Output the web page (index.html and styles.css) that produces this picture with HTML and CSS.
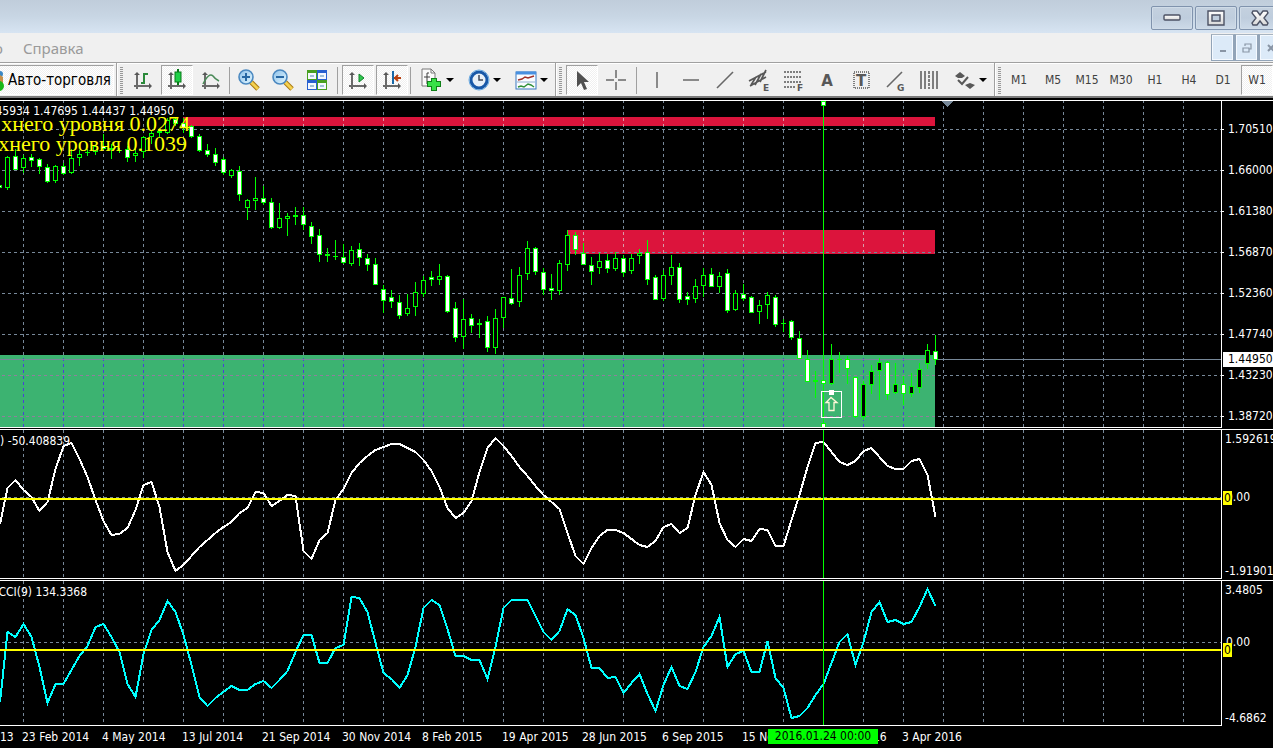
FILE: index.html
```html
<!DOCTYPE html>
<html lang="ru">
<head>
<meta charset="utf-8">
<title>Терминал</title>
<link rel="stylesheet" href="styles.css">
</head>
<body>
<svg class="defs" aria-hidden="true">
  <defs>
    <g id="axes"><path d="M6 5v16M3 18h16" stroke="#6a6a6a" stroke-width="2" fill="none"/><path d="M3 7l3-3 3 3zM18 15l3 3-3 3z" fill="#585858"/></g>
    <linearGradient id="lens" x1="0" y1="0" x2="1" y2="1"><stop offset="0" stop-color="#8cc0ea"/><stop offset="1" stop-color="#e4f8ff"/></linearGradient>
    <linearGradient id="metal" x1="0" y1="0" x2="0" y2="1"><stop offset="0" stop-color="#fff"/><stop offset="1" stop-color="#d8d8d8"/></linearGradient>
    <g id="glass"><path d="M14 14l7 7" stroke="#a87810" stroke-width="5"/><path d="M14 14l7 7" stroke="#f4d050" stroke-width="3"/><circle cx="9" cy="9" r="7" fill="url(#lens)" stroke="#4a88c0" stroke-width="1.6"/></g>
  </defs>
</svg>

<header class="titlebar">
  <button class="win-btn" aria-label="Свернуть"><svg width="18" height="8"><rect x="1" y="1" width="16" height="5" rx="1" fill="url(#metal)" stroke="#4c5264" stroke-width="1.4"/></svg></button>
  <button class="win-btn" aria-label="Развернуть"><svg width="18" height="16"><path d="M1 1h16v14H1zM5 5v6h8V5z" fill="url(#metal)" fill-rule="evenodd" stroke="#4c5264" stroke-width="1.4"/></svg></button>
  <button class="win-btn" aria-label="Закрыть"><svg width="18" height="16"><path d="M2 1h4l3 4 3-4h4l1 2-4 5 4 5-1 2h-4l-3-4-3 4H2l-1-2 4-5-4-5z" fill="url(#metal)" stroke="#4c5264" stroke-width="1.4"/></svg></button>
</header>

<nav class="menubar">
  <div class="menu-items"><button class="menu-item">о</button><button class="menu-item">Справка</button></div>
  <div class="mdi">
    <button class="mdi-btn" aria-label="Свернуть окно"><svg width="12" height="12"><path d="M3 9h6" stroke="#8995a5" stroke-width="2"/></svg></button>
    <button class="mdi-btn" aria-label="Восстановить окно"><svg width="12" height="12"><path d="M4 4V2h6v5H8M4 2h6M2 6h6v4H2zM2 6h6" stroke="#8995a5" stroke-width="1.2" fill="none"/></svg></button>
    <button class="mdi-btn" aria-label="Закрыть окно"><svg width="12" height="12"><path d="M3 3l6 6M9 3l-6 6" stroke="#8995a5" stroke-width="2"/></svg></button>
  </div>
</nav>

<div class="toolbar" role="toolbar">
  <div class="group">
    <button class="tool auto pressed"><svg width="4" height="24"><circle cx="0" cy="6" r="3" fill="#3c88c4"/><path d="M0 7l3 2v6H0z" fill="#c89048"/><circle cx="-1" cy="18" r="5" fill="#18b818"/></svg><span>Авто-торговля</span></button>
  </div>
  <div class="group">
    <i class="grip"></i>
    <button class="tool" aria-label="Бары"><svg width="24" height="24"><use href="#axes"/><path d="M10 15h3M13 16V5M13 6h4" stroke="#2a8a3a" stroke-width="2" fill="none"/></svg></button>
    <button class="tool pressed" aria-label="Свечи"><svg width="24" height="24"><use href="#axes"/><path d="M13 1v16" stroke="#087818" stroke-width="2"/><rect x="10" y="4" width="6" height="10" fill="#20d048" stroke="#087818"/></svg></button>
    <button class="tool" aria-label="Линия"><svg width="24" height="24"><use href="#axes"/><path d="M4 16q6-12 10-8 2 3 6 5" stroke="#4a8a58" stroke-width="1.5" fill="none"/></svg></button>
    <i class="sep tight"></i>
    <button class="tool" aria-label="Увеличить"><svg width="24" height="24"><use href="#glass"/><path d="M5 9h8M9 5v8" stroke="#2868a4" stroke-width="2"/></svg></button>
    <button class="tool" aria-label="Уменьшить"><svg width="24" height="24"><use href="#glass"/><path d="M5 9h8" stroke="#2868a4" stroke-width="2"/></svg></button>
    <button class="tool" aria-label="Окна"><svg width="24" height="24"><path d="M2 2h10v10H2zM12 12h10v10H12z" fill="#48a020"/><path d="M12 2h10v10H12zM2 12h10v10H2z" fill="#2860d0"/><path d="M3 5h8v6H3zM13 5h8v6h-8zM3 15h8v6H3zM13 15h8v6h-8z" fill="#f4f8ff"/><path d="M5 8h4M15 8h4M5 18h4M15 18h4" stroke="#a0c0d8" stroke-width="2"/></svg></button>
    <i class="sep"></i>
    <button class="tool pressed" aria-label="Автопрокрутка"><svg width="24" height="24"><use href="#axes"/><path d="M13 6v8l5-4z" fill="#30c850" stroke="#108028"/></svg></button>
    <button class="tool pressed" aria-label="Сдвиг графика"><svg width="24" height="24"><use href="#axes"/><path d="M13 3v13" stroke="#1868a8" stroke-width="2"/><path d="M14 10h7M18 7l-3 3 3 3" stroke="#b84010" stroke-width="2" fill="none"/></svg></button>
    <i class="sep tight"></i>
    <button class="tool drop" aria-label="Индикаторы"><svg width="24" height="24"><path d="M2 1h9l4 4v13H2z" fill="#fafafa" stroke="#787878"/><path d="M11 1v4h4" fill="none" stroke="#787878"/><path d="M9 5H7v11M4 9h6" stroke="#404040" fill="none"/><path d="M14 10v13M7 16h14" stroke="#108018" stroke-width="6"/><path d="M14 11v11M8 16h12" stroke="#38e048" stroke-width="4"/></svg><i class="caret"></i></button>
    <button class="tool drop" aria-label="Периоды"><svg width="24" height="24"><circle cx="12" cy="12" r="8" fill="#e8f0f8" stroke="#1858a8" stroke-width="3"/><circle cx="12" cy="12" r="10" fill="none" stroke="#68a8e0"/><path d="M12 7v5h4" stroke="#404858" stroke-width="1.5" fill="none"/></svg><i class="caret"></i></button>
    <button class="tool drop" aria-label="Шаблоны"><svg width="24" height="24"><rect x="2" y="4" width="20" height="17" fill="#fafcff" stroke="#3878c0"/><path d="M2 5h20" stroke="#4890e0" stroke-width="3"/><path d="M4 12l4-1 3-2 3 1 6-2" stroke="#a03028" stroke-width="1.5" fill="none"/><path d="M4 19l3-1 3 1 4-3 3 1 3 2" stroke="#309038" stroke-width="1.5" fill="none"/><path d="M3 14h18" stroke="#90b0d0"/></svg><i class="caret"></i></button>
  </div>
  <div class="group">
    <i class="grip"></i>
    <button class="tool pressed" aria-label="Курсор"><svg width="24" height="24"><path d="M7 3v16l4-4 3 7 3-1-3-7h5z" fill="#505050"/></svg></button>
    <button class="tool" aria-label="Перекрестие"><svg width="24" height="24"><path d="M12 2v8M12 14v8M2 12h8M14 12h8" stroke="#686868" stroke-width="1.5"/></svg></button>
    <i class="sep"></i>
    <button class="tool" aria-label="Вертикальная линия"><svg width="24" height="24"><path d="M12 4v16" stroke="#686868" stroke-width="1.5"/></svg></button>
    <button class="tool" aria-label="Горизонтальная линия"><svg width="24" height="24"><path d="M4 12h16" stroke="#686868" stroke-width="1.5"/></svg></button>
    <button class="tool" aria-label="Трендовая линия"><svg width="24" height="24"><path d="M4 20L20 4" stroke="#686868" stroke-width="1.6"/></svg></button>
    <button class="tool" aria-label="Канал"><svg width="24" height="24"><path d="M2 13L19 4M3 18l16-9M4 17l5-8M8 17l6-11M13 14l6-12" stroke="#585858" stroke-width="1.7"/><text x="16" y="23" class="glyph">E</text></svg></button>
    <button class="tool" aria-label="Фибоначчи"><svg width="24" height="24"><path d="M3 4h18M3 9h18M3 14h18M3 19h12" stroke="#585858" stroke-width="1.5" stroke-dasharray="2 1"/><text x="16" y="23" class="glyph">F</text></svg></button>
    <button class="tool" aria-label="Текст"><svg width="24" height="24"><text x="12" y="18" class="glyph big">A</text></svg></button>
    <button class="tool" aria-label="Метка"><svg width="24" height="24"><rect x="5" y="4" width="15" height="16" fill="none" stroke="#585858" stroke-width="1.5" stroke-dasharray="1 1"/><text x="12" y="18" class="glyph big">T</text></svg></button>
    <button class="tool" aria-label="Линия Ганна"><svg width="24" height="24"><path d="M4 19L19 4" stroke="#686868" stroke-width="1.6"/><text x="14" y="23" class="glyph">G</text></svg></button>
    <button class="tool" aria-label="Циклы"><svg width="24" height="24"><path d="M4 3v18M8 3v18M16 3v18M20 3v18" stroke="#585858" stroke-width="1.5"/><path d="M12 3v18" stroke="#585858" stroke-width="1.5" stroke-dasharray="3 1"/></svg></button>
    <button class="tool drop" aria-label="Стрелки"><svg width="24" height="24"><path d="M7 4l5 4-3 2H5L2 8zM17 15l5 2-5 4-5-4z" fill="#585858"/><path d="M5 12l4 4 6-7" stroke="#585858" stroke-width="2" fill="none"/></svg><i class="caret"></i></button>
  </div>
  <div class="group">
    <i class="grip"></i>
    <button class="tool tf">M1</button><button class="tool tf">M5</button><button class="tool tf">M15</button><button class="tool tf">M30</button><button class="tool tf">H1</button><button class="tool tf">H4</button><button class="tool tf">D1</button><button class="tool tf pressed">W1</button>
  </div>
</div>

<main class="terminal">
  <section class="pane price">
    <svg class="plot" id="price"></svg>
    <div class="scale">
      <span>1.70510</span><span>1.66000</span><span>1.61380</span><span>1.56870</span><span>1.52360</span><span>1.47740</span><span>1.43230</span><span>1.38720</span>
      <b class="current">1.44950</b>
    </div>
  </section>
  <section class="pane osc">
    <svg class="plot" id="osc"></svg>
    <div class="scale ends"><span>1.592619</span><span>-1.91901</span><span class="zero">0.00</span><b class="level">0</b></div>
  </section>
  <section class="pane cci">
    <svg class="plot" id="cci"></svg>
    <div class="scale ends"><span>3.4805</span><span>-4.6862</span><span class="zero">0.00</span><b class="level">0</b></div>
  </section>
  <footer class="dates">
    <span>13</span><span>23 Feb 2014</span><span>4 May 2014</span><span>13 Jul 2014</span><span>21 Sep 2014</span><span>30 Nov 2014</span><span>8 Feb 2015</span><span>19 Apr 2015</span><span>28 Jun 2015</span><span>6 Sep 2015</span><span>15 Nov 2015</span><span>24 Jan 2016</span><span>3 Apr 2016</span>
    <b class="moment">2016.01.24 00:00</b>
  </footer>
</main>
<script src="chart.js"></script>
</body>
</html>
```
FILE: styles.css
```css
* { box-sizing: border-box; }
body { margin: 0; min-height: 100vh; overflow: hidden; display: flex; flex-direction: column; background: #000; font-family: "DejaVu Sans Condensed", "DejaVu Sans", sans-serif; font-size: 12px; }
button { font: inherit; padding: 0; border: 0; background: none; display: flex; align-items: center; justify-content: center; flex: none; }
.defs { position: absolute; width: 0; height: 0; }

.titlebar { display: flex; justify-content: flex-end; align-items: flex-start; gap: 2px; height: 33px; padding-top: 6px; background: linear-gradient(#c0cddb, #c8d6e4 50%, #d7e4f2); }
.win-btn { width: 42px; height: 24px; border: 1px solid #8093ad; border-radius: 2px; box-shadow: inset 0 0 0 1px #d0dce8; background: linear-gradient(#c4d1df, #bfcddd 50%, #cddae8); }
.win-btn:last-child { margin-right: -8px; }

.menubar { display: flex; justify-content: space-between; height: 29px; background: #f0f0f0; }
.menu-items { display: flex; align-items: center; gap: 20px; margin-left: -6px; }
.menu-item { font-family: "Noto Sans", sans-serif; font-size: 15px; color: #9a9a9a; }
.mdi { display: flex; padding-top: 1px; margin-right: -10px; }
.mdi-btn { width: 24px; height: 27px; border: 1px solid #92a4b8; border-right-width: 2px; border-top-color: #a8b4c0; background: #dceaf8; box-shadow: inset 0 0 0 1px #f4f9ff; }

.toolbar { display: flex; height: 36px; border-top: 1px solid #a0a0a0; border-bottom: 2px solid #7c7c7c; background: #f0f0f0; box-shadow: inset 0 1px #fff; }
.group { display: flex; align-items: center; gap: 2px; padding: 1px 2px 0 0; border-right: 1px solid #a0a0a0; box-shadow: 1px 0 #fff; }
.group + .group { padding-left: 3px; }
.group:last-child { border: 0; box-shadow: none; }
.grip { flex: none; width: 3px; height: 27px; margin-right: 2px; background: repeating-linear-gradient(#989898 0 1px, #f0f0f0 1px 2px); }
.group:last-child .grip { margin-right: 0; }
.sep { flex: none; width: 1px; height: 27px; margin: 0 2px; background: #a0a0a0; }
.sep.tight { margin: 0 1px 0 0; }
.tool { width: 32px; height: 30px; }
.tool.pressed { border: 1px solid #a0a0a0; border-right-color: #fff; border-bottom-color: #fff; background: conic-gradient(#fff 25%, #f0f0f0 0 50%, #fff 0 75%, #f0f0f0 0) 0 0 / 2px 2px; }
.tool.auto { width: 114px; justify-content: flex-start; gap: 4px; border-left: 0; font-size: 15px; white-space: nowrap; }
.tool.drop { width: 45px; gap: 2px; }
.tool.tf { font-size: 12px; color: #404040; }
.caret { border: 4px solid transparent; border-top-color: #000; border-bottom: 0; }
.glyph { font: bold 9px "DejaVu Sans", sans-serif; fill: #585858; }
.glyph.big { font-size: 15px; text-anchor: middle; }

.terminal { flex: 1; display: flex; flex-direction: column; padding-top: 2px; color: #fff; }
.pane { display: flex; border-top: 1px solid #fff; position: relative; }
.plot { flex: 1; min-width: 0; height: 100%; border-right: 1px solid #fff; border-bottom: 1px solid #fff; shape-rendering: crispEdges; overflow: hidden; }
.plot text { font-size: 12px; fill: #fff; }
.plot .note { font: 22px "Liberation Serif", serif; fill: #ff0; text-anchor: end; }
.price { height: 328px; margin-bottom: 1px; }
.osc { height: 150px; margin-bottom: 1px; }
.cci { height: 146px; }
.scale { width: 51px; position: relative; display: flex; flex-direction: column; white-space: nowrap; }
.price .scale { padding-top: 8px; }
.scale span { line-height: 14px; }
.price .scale span { flex: none; height: 41px; line-height: 41px; padding-left: 6px; }
.price .scale span::before { content: ""; position: absolute; left: 0; width: 2px; height: 1px; margin-top: 20px; background: #fff; }
.ends { justify-content: space-between; padding: 2px 0 1px 3px; }
.current { position: absolute; left: 1px; right: 0; top: 251px; padding-left: 5px; background: #fff; color: #000; font-weight: normal; line-height: 15px; }
.zero { position: absolute; left: 4px; top: 60px; }
.level { position: absolute; left: 1px; top: 61px; width: 9px; background: #ff0; color: #000; font-weight: normal; line-height: 14px; text-align: center; }
.cci .zero { top: 54px; }
.cci .level { top: 62px; }
.dates { position: relative; display: flex; height: 22px; line-height: 22px; white-space: nowrap; }
.dates span { flex: none; width: 80px; }
.dates span:first-child { width: 22px; }
.moment { position: absolute; left: 768px; top: 3px; width: 110px; background: #0f0; color: #000; font-weight: normal; line-height: 15px; text-align: center; }
```
FILE: chart.js
```js
const STEP = 8;
const GRID = '#778899';
const LIME = '#00ff00';

// [bull, body top, body bottom, high, low], one entry for each week
const candles = [
[0,185,187,184,188],[1,157,187,156,189],[0,156,169,149,169],[1,158,167,155,172],[0,157,160,154,166],[0,159,166,158,173],[0,167,181,164,182],[1,166,180,165,182],
[0,166,173,163,174],[1,158,172,149,173],[1,154,157,150,165],[1,152,152,149,155],[1,146,151,145,154],[0,146,148,134,149],[1,148,149,144,158],[1,150,150,148,152],
[0,149,157,146,161],[1,153,155,149,161],[1,137,151,136,157],[1,133,136,131,143],[1,131,132,129,136],[1,120,132,118,133],[0,119,123,118,125],[0,123,127,118,132],
[0,126,136,125,137],[0,136,150,134,151],[0,150,154,144,156],[0,154,162,148,165],[0,159,172,157,174],[1,170,175,169,177],[0,171,194,166,200],[1,200,207,199,219],
[1,198,200,177,209],[0,198,202,186,204],[0,202,227,198,228],[1,218,227,203,228],[1,216,218,213,235],[1,215,216,207,224],[0,215,224,207,229],[0,226,236,222,243],
[0,235,254,229,261],[1,254,255,248,261],[1,256,256,240,259],[0,257,262,244,263],[1,250,263,246,265],[0,249,257,243,265],[0,258,264,254,270],[0,264,284,258,284],
[0,289,300,285,312],[0,297,301,290,307],[0,302,315,295,318],[1,308,313,294,315],[1,292,306,282,315],[1,280,293,276,296],[0,277,279,271,285],[1,276,279,264,284],
[0,276,311,275,312],[0,308,337,302,341],[1,319,336,299,348],[0,318,325,314,332],[1,323,324,319,337],[0,321,347,316,351],[1,318,347,309,353],[1,297,317,297,327],
[0,298,303,269,304],[1,275,301,267,306],[1,248,273,241,279],[0,248,271,247,274],[0,272,289,268,294],[0,288,290,274,299],[1,263,290,260,294],[1,235,264,230,270],
[0,235,249,232,254],[0,253,264,243,264],[0,265,271,257,284],[1,261,267,253,273],[0,260,268,254,272],[1,258,268,252,270],[0,258,272,255,276],[1,258,270,254,273],
[1,253,255,249,263],[0,252,279,240,284],[0,277,299,275,299],[1,275,298,270,300],[1,267,275,255,284],[0,267,299,263,302],[0,296,299,292,304],[1,286,298,279,302],
[1,275,285,268,296],[0,274,286,268,286],[1,276,286,272,292],[0,273,310,269,312],[1,293,309,290,310],[0,294,298,284,300],[0,297,312,296,312],[1,305,311,300,323],
[1,295,304,292,318],[0,297,324,295,326],[1,323,323,319,331],[0,321,337,320,339],[0,338,358,331,358],[0,359,381,350,381],[1,380,381,371,397],[0,380,383,380,383],
[1,359,383,344,384],[1,359,359,352,372],[0,359,368,356,383],[0,377,416,377,417],[1,384,416,381,419],[1,371,384,365,393],[1,362,370,358,399],[0,362,394,361,399],
[1,384,392,363,393],[0,384,393,376,404],[1,386,393,373,396],[1,369,387,363,392],[1,350,363,344,368],[0,351,359,335,364]];

const oscillator = [524,488,480,490,497,511,502,469,446,443,459,477,500,521,535,534,528,510,485,482,507,552,571,565,556,547,540,533,527,522,513,508,492,493,506,501,495,496,551,559,540,533,500,489,473,463,456,450,447,444,444,448,452,460,471,487,508,518,513,501,472,448,438,446,456,467,476,486,495,502,509,533,556,564,548,536,530,530,533,539,545,547,541,527,524,533,528,495,472,485,523,540,547,539,541,529,530,546,546,520,495,467,443,442,452,462,465,461,451,448,457,466,469,469,461,459,475,517];
const cci = [702,632,637,624,637,667,703,684,684,670,656,646,627,624,637,652,684,697,654,630,620,601,612,635,665,697,706,698,692,686,690,690,684,681,688,680,671,652,635,635,663,663,648,645,597,598,612,643,673,679,688,675,647,608,600,605,629,656,656,660,660,679,647,608,600,600,600,616,632,640,631,609,615,638,668,668,678,677,693,683,674,694,711,685,667,686,689,672,647,636,617,667,654,651,672,672,641,678,688,718,716,708,695,684,663,642,634,665,642,612,602,622,620,624,622,607,589,606];

const rect = (x, y, w, h, attrs) => `<rect x="${x}" y="${y}" width="${w}" height="${h}" ${attrs}/>`;
const vline = (x, y1, y2, color, offset) => `<path d="M${x}.5 ${y1}V${y2}" stroke="${color}" stroke-dasharray="3" stroke-dashoffset="${offset}"/>`;
const hline = (y, color) => `<line x1="0" x2="100%" y1="${y}.5" y2="${y}.5" stroke="${color}" stroke-dasharray="3" stroke-dashoffset="4"/>`;

function columns(top, bottom, color, offset, from, to) {
  let out = '';
  for (let x = 23; x < to; x += 40) if (x >= from) out += vline(x, top, bottom, color, offset);
  return out;
}

function curve(values, color) {
  const points = values.map((y, i) => `${i * STEP - (i ? 0.5 : 0)},${y}`);
  return `<polyline points="${points.join(' ')}" fill="none" stroke="${color}" stroke-width="2"/>`;
}

function cursor(top, bottom) {
  return rect(823, top, 1, bottom - top, `fill="${LIME}"`);
}

function draw(id, top, content) {
  document.getElementById(id).innerHTML = `<g transform="translate(0,${-top})">${content}</g>`;
}

const wide = Math.max(1221, window.innerWidth);
let main = columns(100, 428, GRID, 0, 0, wide);
[129, 170, 211, 252, 293, 334, 375, 416].forEach(y => { main += hline(y, GRID); });
main += rect(183, 117, 752, 9, 'fill="#dc143c"') + rect(568, 230, 367, 24, 'fill="#dc143c"') + rect(0, 355, 935, 72, 'fill="#3cb371"');
main += columns(117, 126, '#d89aa8', 5, 183, 935) + columns(230, 254, '#d89aa8', 4, 568, 935) + columns(355, 427, '#4a40d8', 3, 0, 935);
main += `<path d="M568 252.5H935" stroke="${GRID}" stroke-dasharray="3"/>`;
main += '<path d="M0 375.5H935M0 416.5H935" stroke="#8f809c" stroke-dasharray="3" stroke-dashoffset="4"/>';
main += `<line x1="0" x2="100%" y1="359.5" y2="359.5" stroke="${GRID}"/>`;
main += cursor(101, 427);
candles.forEach(([bull, a, b, high, low], i) => {
  const x = i * STEP - 1;
  main += rect(x, high, 1, low - high + 1, `fill="${LIME}"`) + rect(x - 2, a, 5, b - a + 1, `fill="${LIME}"`);
  if (b - a > 1) main += rect(x - 1, a + 1, 3, b - a - 1, `fill="${bull ? '#000' : '#fff'}"`);
});
[101, 423].forEach(y => { main += rect(821, y, 5, 5, `fill="${LIME}"`) + rect(822, y + 1, 3, 3, 'fill="#fff"'); });
main += rect(821.5, 391.5, 20, 26, 'fill="none" stroke="#fff"') + rect(829, 390, 5, 5, 'fill="#fff"');
main += '<path d="M831 397.500l-5 5h3v8h5v-8h3z" fill="none" stroke="#fff8d8" stroke-width="1.300" shape-rendering="auto"/>';
main += `<path d="M942 101h11l-5.500 6z" fill="${GRID}"/>`;
main += '<text x="174" y="115" text-anchor="end">1.45934 1.47695 1.44437 1.44950</text>';
main += '<text x="190" y="131" class="note">хнего уровня 0.0274</text><text x="187" y="151" class="note">хнего уровня 0.1039</text>';
draw('price', 101, main);

function indicator(id, top, bottom, gridY, zeroY, values, color, label) {
  draw(id, top, columns(top, bottom, GRID, 0, 0, wide) + hline(gridY, GRID) + label + curve(values, color)
    + rect(0, zeroY, '100%', 2, 'fill="#ff0"') + cursor(top, bottom));
}
indicator('osc', 430, 578, 497, 498, oscillator, '#fff', '<text x="70" y="445" text-anchor="end">) -50.408839</text>');
indicator('cci', 581, 725, 642, 649, cci, '#0ff', '<text x="87" y="596" text-anchor="end">CCI(9) 134.3368</text>');
```
